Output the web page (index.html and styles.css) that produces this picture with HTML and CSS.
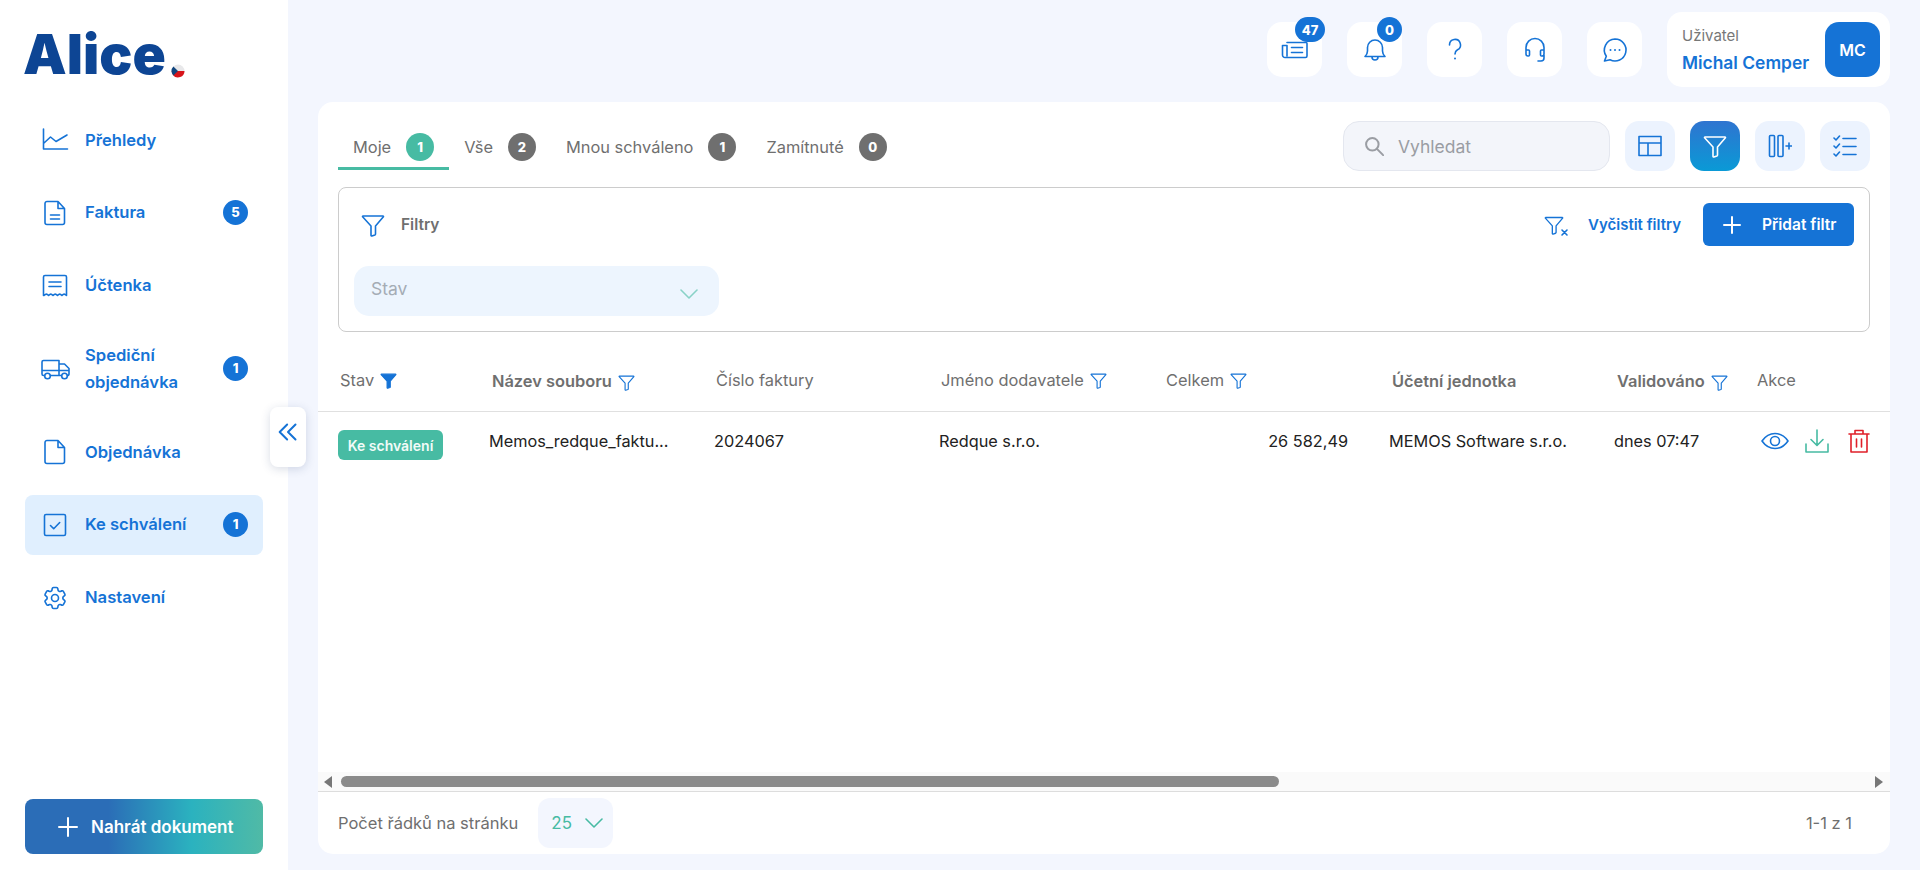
FILE: index.html
```html
<!DOCTYPE html>
<html lang="cs">
<head>
    <meta charset="UTF-8">
    <title>Alice - Ke schválení</title>
    <link rel="stylesheet" href="styles.css">
</head>
<body>
    <svg class="defs">
        <symbol id="funnel" viewBox="0 0 24 24"><path d="M2 3h20a.5.5 0 0 1 .4.8L14.500 13v8a1 1 0 0 1-.6.9l-3 1a.7.7 0 0 1-.9-.7V13L1.600 3.800A.5.5 0 0 1 2 3z"/></symbol>
        <symbol id="chevron" viewBox="0 0 18 10"><path d="M1 1l8 8 8-8"/></symbol>
    </svg>

    <aside class="sidebar">
        <div class="logo">
            <span class="logo-text">Alice</span>
            <svg class="logo-dot" viewBox="0 0 14 14">
                <circle cx="7" cy="7" r="6.500" fill="#e8e8ea"/>
                <path d="M.5 7h13a6.500 6.500 0 0 1-11.600 4z" fill="#d7141a"/>
                <path d="M2.400 2.400L7 7l-4.600 4.600a6.500 6.500 0 0 1 0-9.200z" fill="#11457e"/>
            </svg>
        </div>

        <nav class="nav">
            <a class="nav-item">
                <svg class="nav-icon" viewBox="0 0 28 28"><path d="M2.500 3v20h24M3 17l6.500-6 5.500 4.500L26 9"/></svg>
                <span class="nav-label">Přehledy</span>
            </a>
            <a class="nav-item">
                <svg class="nav-icon" viewBox="0 0 28 28"><path d="M6 2.500h11l6.500 7v14a2 2 0 0 1-2 2H6a2 2 0 0 1-2-2v-19a2 2 0 0 1 2-2zM17 2.500v7h6.500M9.500 16h9M9.500 20h9"/></svg>
                <span class="nav-label">Faktura</span>
                <span class="nav-badge">5</span>
            </a>
            <a class="nav-item">
                <svg class="nav-icon" viewBox="0 0 28 28"><path d="M2.500 24.500V6A1.500 1.500 0 0 1 4 4.500h20A1.500 1.500 0 0 1 25.500 6v18.500c-1.900-1.800-2.900-1.800-4.600 0-1.700-1.800-2.700-1.800-4.400 0-1.700-1.800-2.800-1.800-4.500 0-1.700-1.800-2.700-1.800-4.400 0-1.700-1.800-2.700-1.800-4.600 0zM8 11h12M8 15.500h12"/></svg>
                <span class="nav-label">Účtenka</span>
            </a>
            <a class="nav-item nav-item-tall">
                <svg class="nav-icon" viewBox="0 0 28 28"><path d="M3.500 20.500H2.500A1.500 1.500 0 0 1 1 19V7a1.500 1.500 0 0 1 1.500-1.500H18V20.500H9.500M18 9h5.500l4.500 4.500V19a1.500 1.500 0 0 1-1.500 1.500M18 20.500h2M1 15.500h27"/><circle cx="6.500" cy="21" r="2.800"/><circle cx="23.500" cy="21" r="2.800"/></svg>
                <span class="nav-label">Spediční objednávka</span>
                <span class="nav-badge">1</span>
            </a>
            <a class="nav-item">
                <svg class="nav-icon" viewBox="0 0 28 28"><path d="M6 2.500h11l6.500 7v14a2 2 0 0 1-2 2H6a2 2 0 0 1-2-2v-19a2 2 0 0 1 2-2zM17 2.500v7h6.500"/></svg>
                <span class="nav-label">Objednávka</span>
            </a>
            <a class="nav-item nav-item-active">
                <svg class="nav-icon" viewBox="0 0 28 28"><rect x="3.500" y="3.500" width="21" height="21" rx="1.500"/><path d="M9.500 14.500l3.200 3.200 6-6.200"/></svg>
                <span class="nav-label">Ke schválení</span>
                <span class="nav-badge">1</span>
            </a>
            <a class="nav-item">
                <svg class="nav-icon nav-icon-gear" viewBox="0 0 24 24"><path d="M9.594 3.940c.09-.542.56-.94 1.110-.94h2.593c.55 0 1.020.398 1.110.94l.213 1.281c.063.374.313.686.645.870.074.040.147.083.22.127.325.196.72.257 1.075.124l1.217-.456a1.125 1.125 0 0 1 1.370.49l1.296 2.247a1.125 1.125 0 0 1-.26 1.431l-1.003.827c-.293.241-.438.613-.43.992a7.723 7.723 0 0 1 0 .255c-.008.378.137.75.43.991l1.004.827c.424.35.534.955.26 1.430l-1.298 2.247a1.125 1.125 0 0 1-1.369.491l-1.217-.456c-.355-.133-.75-.072-1.076.124a6.470 6.470 0 0 1-.22.128c-.331.183-.581.495-.644.869l-.213 1.281c-.09.543-.56.94-1.110.94h-2.594c-.55 0-1.019-.398-1.110-.94l-.213-1.281c-.062-.374-.312-.686-.644-.87a6.520 6.520 0 0 1-.22-.127c-.325-.196-.72-.257-1.076-.124l-1.217.456a1.125 1.125 0 0 1-1.369-.49l-1.297-2.247a1.125 1.125 0 0 1 .26-1.431l1.004-.827c.292-.24.437-.613.43-.991a6.932 6.932 0 0 1 0-.255c.007-.38-.138-.751-.43-.992l-1.004-.827a1.125 1.125 0 0 1-.26-1.430l1.297-2.247a1.125 1.125 0 0 1 1.370-.491l1.216.456c.356.133.751.072 1.076-.124.072-.044.146-.086.22-.128.332-.183.582-.495.644-.869l.214-1.280zM15 12a3 3 0 1 1-6 0 3 3 0 0 1 6 0z"/></svg>
                <span class="nav-label">Nastavení</span>
            </a>
        </nav>

        <button class="upload-button">
            <svg class="plus-icon" viewBox="0 0 20 20"><path d="M10 1v18M1 10h18"/></svg>
            Nahrát dokument
        </button>

        <button class="collapse-button">
            <svg viewBox="0 0 24 24"><path d="M11 3l-9 9 9 9M21 3l-9 9 9 9"/></svg>
        </button>
    </aside>

    <div class="main">
        <header class="topbar">
            <button class="top-button">
                <svg viewBox="0 0 28 28"><path d="M6 6.500h19a1 1 0 0 1 1 1V20a1.500 1.500 0 0 1-1.500 1.500H4A2.500 2.500 0 0 1 1.500 19V9.500H6V20M10.500 11.500h11M10.500 16.500h11"/></svg>
                <span class="top-badge">47</span>
            </button>
            <button class="top-button">
                <svg viewBox="0 0 28 28"><path d="M4 20.500c1.500-1.500 2.500-3 2.500-5.500v-3.500a7.500 7.500 0 0 1 15 0V15c0 2.500 1 4 2.500 5.500zM11 21c0 4 6 4 6 0"/></svg>
                <span class="top-badge top-badge-small">0</span>
            </button>
            <button class="top-button">
                <svg viewBox="0 0 28 28"><path d="M8.500 9a5.500 5.500 0 1 1 8 4.800c-1.700 1-2.500 2-2.500 4.200"/><circle class="dot" cx="14" cy="22.500" r="1"/></svg>
            </button>
            <button class="top-button">
                <svg viewBox="0 0 28 28"><path d="M5 14v-2.500a9 9 0 0 1 18 0V14M5 14h2.500a1 1 0 0 1 1 1v4a1 1 0 0 1-1 1H7a2 2 0 0 1-2-2zM23 14h-2.500a1 1 0 0 0-1 1v4a1 1 0 0 0 1 1h.5a2 2 0 0 0 2-2zM23 19v3a3 3 0 0 1-3 3h-3"/></svg>
            </button>
            <button class="top-button">
                <svg viewBox="0 0 28 28"><path d="M14 3a11 11 0 1 1-5 20.800L3.500 25l1.800-4.800A11 11 0 0 1 14 3z"/><circle class="dot" cx="9.500" cy="14" r="1"/><circle class="dot" cx="14" cy="14" r="1"/><circle class="dot" cx="18.500" cy="14" r="1"/></svg>
            </button>
            <div class="user-box">
                <div class="user-info">
                    <span class="user-role">Uživatel</span>
                    <span class="user-name">Michal Cemper</span>
                </div>
                <div class="avatar">MC</div>
            </div>
        </header>

        <section class="card">
            <div class="card-top">
                <div class="tabs">
                    <div class="tab tab-active">Moje <span class="tab-badge">1</span></div>
                    <div class="tab">Vše <span class="tab-badge">2</span></div>
                    <div class="tab">Mnou schváleno <span class="tab-badge">1</span></div>
                    <div class="tab">Zamítnuté <span class="tab-badge">0</span></div>
                </div>
                <div class="tools">
                    <div class="search">
                        <svg viewBox="0 0 24 24"><circle cx="10" cy="10" r="7.500"/><path d="M15.500 15.500L23 23"/></svg>
                        <span>Vyhledat</span>
                    </div>
                    <button class="tool-button">
                        <svg viewBox="0 0 24 24"><path d="M1 2.500h22v19H1zM1 9h22M10 9v12.500"/></svg>
                    </button>
                    <button class="tool-button tool-button-active">
                        <svg class="funnel"><use href="#funnel"/></svg>
                    </button>
                    <button class="tool-button">
                        <svg viewBox="0 0 24 24"><rect x="1.500" y="1.500" width="5" height="21" rx="1"/><rect x="10" y="1.500" width="5" height="21" rx="1"/><path d="M18 12h6M21 9v6"/></svg>
                    </button>
                    <button class="tool-button">
                        <svg viewBox="0 0 24 24"><path d="M1 4l2 2 3.500-4M1 12l2 2 3.500-4M1 20l2 2 3.500-4M10 4.500h13M10 12.500h13M10 20.500h13"/></svg>
                    </button>
                </div>
            </div>

            <div class="filters">
                <div class="filters-head">
                    <svg class="funnel funnel-big"><use href="#funnel"/></svg>
                    <span class="filters-title">Filtry</span>
                    <div class="filters-actions">
                        <svg class="funnel funnel-big" viewBox="0 0 24 24"><use href="#funnel" width="20" height="24"/><path d="M18 17l5 5M23 17l-5 5"/></svg>
                        <span class="clear-filters">Vyčistit filtry</span>
                        <button class="add-filter">
                            <svg class="plus-icon" viewBox="0 0 20 20"><path d="M10 2v16M2 10h16"/></svg>
                            Přidat filtr
                        </button>
                    </div>
                </div>
                <div class="select">
                    <span>Stav</span>
                    <svg class="chevron chevron-light"><use href="#chevron"/></svg>
                </div>
            </div>

            <div class="table">
                <div class="table-row table-head">
                    <div class="th">Stav <svg class="funnel funnel-small funnel-filled"><use href="#funnel"/></svg></div>
                    <div class="th th-bold">Název souboru <svg class="funnel funnel-small"><use href="#funnel"/></svg></div>
                    <div class="th">Číslo faktury</div>
                    <div class="th">Jméno dodavatele <svg class="funnel funnel-small"><use href="#funnel"/></svg></div>
                    <div class="th">Celkem <svg class="funnel funnel-small"><use href="#funnel"/></svg></div>
                    <div class="th th-bold">Účetní jednotka</div>
                    <div class="th th-bold">Validováno <svg class="funnel funnel-small"><use href="#funnel"/></svg></div>
                    <div class="th th-plain">Akce</div>
                </div>
                <div class="table-row table-body-row">
                    <div class="td"><span class="status">Ke schválení</span></div>
                    <div class="td">Memos_redque_faktu...</div>
                    <div class="td">2024067</div>
                    <div class="td">Redque s.r.o.</div>
                    <div class="td td-amount">26 582,49</div>
                    <div class="td">MEMOS Software s.r.o.</div>
                    <div class="td">dnes 07:47</div>
                    <div class="td td-actions">
                        <svg class="action-eye" viewBox="0 0 28 18"><path d="M1 9c3.500-5 8-7.500 13-7.500S23.500 4 27 9c-3.500 5-8 7.500-13 7.500S4.500 14 1 9z"/><circle cx="14" cy="9" r="4.500"/></svg>
                        <svg class="action-download" viewBox="0 0 24 24"><path d="M12 1v15M6 10.500l6 6 6-6M1 15v8h22v-8"/></svg>
                        <svg class="action-trash" viewBox="0 0 22 24"><path d="M1 5h20M7 5V1.500h8V5M3 5v18h16V5M8.500 10v8M13.500 10v8"/></svg>
                    </div>
                </div>
            </div>

            <div class="scrollbar">
                <span class="arrow arrow-left"></span>
                <div class="scroll-track"><div class="scroll-thumb"></div></div>
                <span class="arrow arrow-right"></span>
            </div>

            <footer class="card-footer">
                <span>Počet řádků na stránku</span>
                <div class="page-size">25 <svg class="chevron"><use href="#chevron"/></svg></div>
                <span class="page-range">1-1 z 1</span>
            </footer>
        </section>
    </div>
</body>
</html>
```
FILE: styles.css
```css
* {
    box-sizing: border-box;
}
html, body {
    height: 100%;
}
body {
    margin: 0;
    display: flex;
    height: 870px;
    overflow: hidden;
    background-color: #f3f6fe;
    font-family: Inter, "Noto Sans", sans-serif;
    color: #6f6f6f;
}
button {
    font-family: inherit;
    border: none;
    cursor: pointer;
}
svg {
    fill: none;
    stroke: currentColor;
    stroke-width: 1.6;
    stroke-linecap: round;
    stroke-linejoin: round;
    flex-shrink: 0;
}
.defs {
    display: none;
}
.dot {
    fill: currentColor;
    stroke: none;
}

/* sidebar */
.sidebar {
    position: relative;
    flex: 0 0 288px;
    display: flex;
    flex-direction: column;
    padding: 24px 25px 16px;
    background-color: #fff;
}
.logo {
    display: flex;
    align-items: flex-end;
    height: 60px;
}
.logo-text {
    margin-left: -2px;
    font-size: 55px;
    font-weight: 900;
    line-height: 60px;
    color: #0d4594;
}
.logo-dot {
    width: 14px;
    height: 14px;
    margin: 0 0 6px 5px;
    stroke: none;
}
.nav {
    display: flex;
    flex-direction: column;
    gap: 12.6px;
    margin-top: 26px;
}
.nav-item {
    display: flex;
    align-items: center;
    gap: 16px;
    height: 60px;
    padding: 0 15px 0 16px;
    border-radius: 8px;
    color: #1573d6;
    font-size: 16.6px;
    font-weight: 600;
    line-height: 27px;
}
.nav-item-tall {
    height: 82px;
}
.nav-item-active {
    background-color: #e0effe;
}
.nav-icon {
    width: 28px;
    height: 28px;
    overflow: visible;
}
.nav-icon-gear {
    stroke-width: 1.4;
}
.nav-label {
    flex: 1;
    max-width: 110px;
}
.nav-badge {
    display: flex;
    align-items: center;
    justify-content: center;
    width: 25px;
    height: 25px;
    margin-left: auto;
    border-radius: 50%;
    background-color: #1573d6;
    color: #fff;
    font-size: 13px;
    font-weight: 800;
}
.upload-button {
    display: flex;
    align-items: center;
    gap: 13px;
    height: 55px;
    margin-top: auto;
    padding-left: 33px;
    border-radius: 8px;
    background: linear-gradient(90deg, #2b6db7 0%, #2b6db7 35%, #2bb2bf 70%, #50baa6 100%);
    color: #fff;
    font-size: 17px;
    font-weight: 600;
}
.plus-icon {
    width: 20px;
    height: 20px;
    stroke-width: 2;
}
.collapse-button {
    position: absolute;
    top: 407px;
    left: 270px;
    display: flex;
    align-items: center;
    justify-content: center;
    width: 36px;
    height: 60px;
    padding: 0 0 10px;
    border-radius: 8px;
    background-color: #fff;
    box-shadow: 0 2px 10px rgba(40, 60, 110, 0.18);
    color: #1573d6;
}
.collapse-button svg {
    width: 20px;
    height: 20px;
    stroke-width: 2.4;
}

/* top bar */
.main {
    flex: 1;
    display: flex;
    flex-direction: column;
    padding: 12px 30px 16px;
    min-width: 0;
}
.topbar {
    display: flex;
    align-items: center;
    justify-content: flex-end;
    gap: 25px;
    height: 75px;
    flex-shrink: 0;
}
.top-button {
    position: relative;
    display: flex;
    align-items: center;
    justify-content: center;
    width: 55px;
    height: 55px;
    padding: 0;
    border-radius: 15px;
    background-color: #fff;
    color: #1573d6;
}
.top-button svg {
    width: 28px;
    height: 28px;
}
.top-badge {
    position: absolute;
    top: -5px;
    right: -3px;
    display: flex;
    align-items: center;
    justify-content: center;
    width: 30px;
    height: 25px;
    border-radius: 13px;
    background-color: #1573d6;
    color: #fff;
    font-size: 13px;
    font-weight: 800;
}
.top-badge-small {
    width: 25px;
    right: 0;
}
.user-box {
    display: flex;
    align-items: center;
    justify-content: space-between;
    width: 223px;
    height: 75px;
    padding: 0 10px 0 15px;
    border-radius: 15px;
    background-color: #fff;
}
.user-info {
    display: flex;
    flex-direction: column;
    gap: 7px;
}
.user-role {
    font-size: 15px;
    color: #777;
}
.user-name {
    font-size: 17.4px;
    font-weight: 600;
    color: #1573d6;
}
.avatar {
    display: flex;
    align-items: center;
    justify-content: center;
    width: 55px;
    height: 55px;
    border-radius: 14px;
    background-color: #1573d6;
    color: #fff;
    font-size: 16px;
    font-weight: 600;
}

/* card */
.card {
    flex: 1;
    display: flex;
    flex-direction: column;
    margin-top: 15px;
    border-radius: 15px;
    background-color: #fff;
    min-height: 0;
}
.card-top {
    display: flex;
    justify-content: space-between;
    height: 85px;
    padding: 19px 20px 0;
    flex-shrink: 0;
}
.tabs {
    display: flex;
    height: 49px;
}
.tab {
    display: flex;
    align-items: center;
    gap: 15px;
    height: 49px;
    padding: 11px 15px 6px;
    border-bottom: 3px solid transparent;
    font-size: 16.4px;
}
.tab-active {
    border-bottom-color: #47bba3;
}
.tab-badge {
    display: flex;
    align-items: center;
    justify-content: center;
    width: 28px;
    height: 28px;
    border-radius: 50%;
    background-color: #6f6f6f;
    color: #fff;
    font-size: 13px;
    font-weight: 800;
}
.tab-active .tab-badge {
    background-color: #47bba3;
}
.tools {
    display: flex;
    gap: 15px;
}
.search {
    display: flex;
    align-items: center;
    gap: 14px;
    width: 267px;
    height: 50px;
    padding-left: 20px;
    border: 1px solid #e4e7ef;
    border-radius: 16px;
    background-color: #f3f5fa;
    color: #9a9da3;
    font-size: 17.5px;
}
.search svg {
    width: 20px;
    height: 20px;
    stroke-width: 2.4;
}
.tool-button {
    display: flex;
    align-items: center;
    justify-content: center;
    width: 50px;
    height: 50px;
    padding: 0;
    border-radius: 14px;
    background-color: #ecf3fe;
    color: #1573d6;
}
.tool-button svg {
    width: 24px;
    height: 24px;
}
.tool-button-active {
    background: linear-gradient(180deg, #2f74d0, #0a9ad6);
}

/* filters */
.funnel {
    width: 24px;
    height: 24px;
    color: #1573d6;
}
.tool-button-active .funnel {
    color: #fff;
}
.funnel-big {
    overflow: visible;
}
.filters {
    flex-shrink: 0;
    height: 145px;
    margin: 0 20px;
    padding: 15px 15px 0;
    border: 1px solid #ccc;
    border-radius: 8px;
}
.filters-head {
    display: flex;
    align-items: center;
    height: 43px;
    padding-left: 7px;
}
.filters-title {
    margin-left: 16px;
    font-size: 15.500px;
    font-weight: 600;
}
.filters-actions {
    display: flex;
    align-items: center;
    margin-left: auto;
}
.clear-filters {
    margin: 0 22px 0 20px;
    color: #1573d6;
    font-size: 15px;
    font-weight: 600;
}
.add-filter {
    display: flex;
    align-items: center;
    gap: 20px;
    width: 151px;
    height: 43px;
    padding-left: 19px;
    border-radius: 6px;
    background-color: #1573d6;
    color: #fff;
    font-size: 15.500px;
    font-weight: 600;
    white-space: nowrap;
}
.select {
    display: flex;
    align-items: center;
    justify-content: space-between;
    width: 365px;
    height: 50px;
    margin-top: 20px;
    padding: 0 21px 0 17px;
    border-radius: 15px;
    background-color: #edf5fe;
    color: #a4acb5;
    font-size: 17.5px;
}
.select span {
    margin-bottom: 6px;
}
.chevron {
    width: 18px;
    height: 10px;
    color: #47bba3;
}
.chevron-light {
    margin-top: 5px;
    opacity: 0.6;
}

/* table */
.table {
    flex: 1;
}
.table-row {
    display: grid;
    grid-template-columns: 151px 225px 225px 225px 225px 225px 143px 1fr;
    padding-left: 20px;
}
.table-head {
    height: 80px;
    align-items: center;
    padding-top: 16px;
    border-bottom: 1px solid #e0e0e0;
}
.th {
    display: flex;
    align-items: center;
    gap: 6px;
    padding-left: 2px;
    font-size: 16.4px;
    white-space: nowrap;
}
.th-bold {
    padding: 3px 0 0 3px;
    font-weight: 600;
}
.th-plain {
    padding-left: 0;
}
.funnel-small {
    width: 17px;
    height: 17px;
    margin-top: 2px;
}
.funnel-filled {
    fill: #1573d6;
}
.table-body-row {
    align-items: center;
    height: 62px;
    font-size: 16.3px;
    color: #222;
}
.td {
    margin-bottom: 4px;
    white-space: nowrap;
}
.td-amount {
    padding-right: 41px;
    text-align: right;
}
.status {
    display: inline-flex;
    align-items: center;
    justify-content: center;
    width: 105px;
    height: 30px;
    margin-top: 8px;
    border-radius: 6px;
    background-color: #47bba3;
    color: #f2fbf8;
    font-size: 14px;
    font-weight: 600;
}
.td-actions {
    display: flex;
    align-items: center;
    gap: 16px;
    padding-left: 4px;
}
.action-eye {
    width: 28px;
    height: 18px;
    color: #1573d6;
}
.action-download {
    width: 24px;
    height: 24px;
    color: #47bba3;
}
.action-trash {
    width: 22px;
    height: 24px;
    margin-left: 3px;
    color: #e0202a;
}

/* scrollbar and footer */
.scrollbar {
    display: flex;
    align-items: center;
    flex-shrink: 0;
    height: 20px;
    background-color: #fafafa;
    border-bottom: 1px solid #ddd;
}
.arrow {
    width: 0;
    height: 0;
    border-top: 6px solid transparent;
    border-bottom: 6px solid transparent;
}
.arrow-left {
    margin-left: 6px;
    border-right: 8px solid #777;
}
.arrow-right {
    margin-right: 7px;
    border-left: 8px solid #777;
}
.scroll-track {
    flex: 1;
    margin: 0 9px;
}
.scroll-thumb {
    width: 938px;
    height: 11px;
    border-radius: 6px;
    background-color: #8b8b8b;
}
.card-footer {
    display: flex;
    align-items: center;
    flex-shrink: 0;
    height: 62px;
    padding: 0 38px 0 20px;
    font-size: 16.500px;
}
.page-size {
    display: flex;
    align-items: center;
    gap: 13px;
    width: 75px;
    height: 50px;
    margin-left: 20px;
    padding-left: 13px;
    border-radius: 12px;
    background-color: #f3f6fe;
    color: #47bba3;
    font-size: 17px;
}
.page-range {
    margin-left: auto;
}
```
